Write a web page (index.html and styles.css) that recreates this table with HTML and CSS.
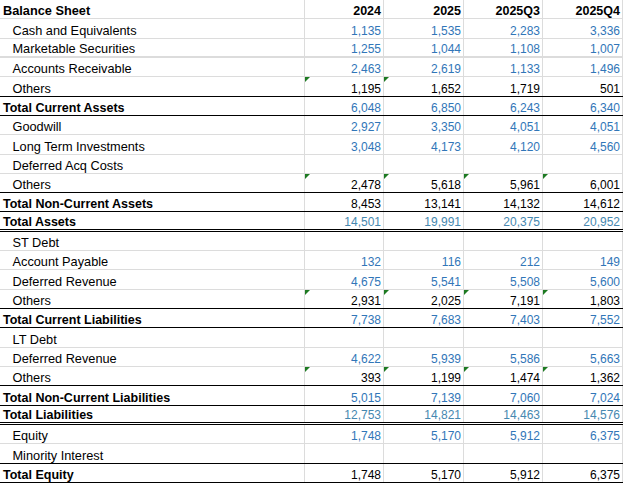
FILE: index.html
```html
<!DOCTYPE html>
<html>
<head>
<meta charset="utf-8">
<link rel="stylesheet" href="styles.css">
</head>
<body>
<div class="sheet">
  <div class="row head"><div class="c lab">Balance Sheet</div><div class="c num">2024</div><div class="c num">2025</div><div class="c num">2025Q3</div><div class="c num">2025Q4</div></div>
  <div class="row blue"><div class="c lab ind">Cash and Equivalents</div><div class="c num">1,135</div><div class="c num">1,535</div><div class="c num">2,283</div><div class="c num">3,336</div></div>
  <div class="row blue gray2"><div class="c lab ind">Marketable Securities</div><div class="c num">1,255</div><div class="c num">1,044</div><div class="c num">1,108</div><div class="c num">1,007</div></div>
  <div class="row blue"><div class="c lab ind">Accounts Receivable</div><div class="c num">2,463</div><div class="c num">2,619</div><div class="c num">1,133</div><div class="c num">1,496</div></div>
  <div class="row rule"><div class="c lab ind">Others</div><div class="c num flag">1,195</div><div class="c num flag">1,652</div><div class="c num">1,719</div><div class="c num">501</div></div>
  <div class="row blue tot rule"><div class="c lab">Total Current Assets</div><div class="c num">6,048</div><div class="c num">6,850</div><div class="c num">6,243</div><div class="c num">6,340</div></div>
  <div class="row blue"><div class="c lab ind">Goodwill</div><div class="c num">2,927</div><div class="c num">3,350</div><div class="c num">4,051</div><div class="c num">4,051</div></div>
  <div class="row blue"><div class="c lab ind">Long Term Investments</div><div class="c num">3,048</div><div class="c num">4,173</div><div class="c num">4,120</div><div class="c num">4,560</div></div>
  <div class="row"><div class="c lab ind">Deferred Acq Costs</div><div class="c num"></div><div class="c num"></div><div class="c num"></div><div class="c num"></div></div>
  <div class="row rule"><div class="c lab ind">Others</div><div class="c num flag">2,478</div><div class="c num flag">5,618</div><div class="c num flag">5,961</div><div class="c num flag">6,001</div></div>
  <div class="row tot rule"><div class="c lab">Total Non-Current Assets</div><div class="c num">8,453</div><div class="c num">13,141</div><div class="c num">14,132</div><div class="c num">14,612</div></div>
  <div class="row teal tot dbl"><div class="c lab">Total Assets</div><div class="c num">14,501</div><div class="c num">19,991</div><div class="c num">20,375</div><div class="c num">20,952</div></div>
  <div class="row"><div class="c lab ind">ST Debt</div><div class="c num"></div><div class="c num"></div><div class="c num"></div><div class="c num"></div></div>
  <div class="row blue"><div class="c lab ind">Account Payable</div><div class="c num">132</div><div class="c num">116</div><div class="c num">212</div><div class="c num">149</div></div>
  <div class="row blue"><div class="c lab ind">Deferred Revenue</div><div class="c num">4,675</div><div class="c num">5,541</div><div class="c num">5,508</div><div class="c num">5,600</div></div>
  <div class="row rule"><div class="c lab ind">Others</div><div class="c num flag">2,931</div><div class="c num flag">2,025</div><div class="c num flag">7,191</div><div class="c num flag">1,803</div></div>
  <div class="row blue tot rule"><div class="c lab">Total Current Liabilities</div><div class="c num">7,738</div><div class="c num">7,683</div><div class="c num">7,403</div><div class="c num">7,552</div></div>
  <div class="row"><div class="c lab ind">LT Debt</div><div class="c num"></div><div class="c num"></div><div class="c num"></div><div class="c num"></div></div>
  <div class="row blue"><div class="c lab ind">Deferred Revenue</div><div class="c num">4,622</div><div class="c num">5,939</div><div class="c num">5,586</div><div class="c num">5,663</div></div>
  <div class="row rule"><div class="c lab ind">Others</div><div class="c num flag">393</div><div class="c num flag">1,199</div><div class="c num flag">1,474</div><div class="c num flag">1,362</div></div>
  <div class="row blue tot rule"><div class="c lab">Total Non-Current Liabilities</div><div class="c num">5,015</div><div class="c num">7,139</div><div class="c num">7,060</div><div class="c num">7,024</div></div>
  <div class="row teal tot dbl"><div class="c lab">Total Liabilities</div><div class="c num">12,753</div><div class="c num">14,821</div><div class="c num">14,463</div><div class="c num">14,576</div></div>
  <div class="row blue"><div class="c lab ind">Equity</div><div class="c num">1,748</div><div class="c num">5,170</div><div class="c num">5,912</div><div class="c num">6,375</div></div>
  <div class="row rule"><div class="c lab ind">Minority Interest</div><div class="c num"></div><div class="c num"></div><div class="c num"></div><div class="c num"></div></div>
  <div class="row tot rule"><div class="c lab">Total Equity</div><div class="c num">1,748</div><div class="c num">5,170</div><div class="c num">5,912</div><div class="c num">6,375</div></div>
</div>
</body>
</html>
```
FILE: styles.css
```css
body {
  margin: 0;
  background: #fff;
  font-family: "Liberation Sans", Arial, sans-serif;
  color: #000;
}
.sheet {
  width: 623px;
}
.row {
  display: grid;
  grid-template-columns: 305px 79px 80px 79px 80px;
  height: 19.32px;
  box-sizing: border-box;
  border-bottom: 1px solid #dcdcdc;
}
.c {
  box-sizing: border-box;
  border-right: 1px solid #dcdcdc;
  display: flex;
  align-items: flex-end;
  padding-bottom: 0;
  line-height: 14px;
  position: relative;
  white-space: nowrap;
}
.lab {
  padding-left: 3px;
  font-size: 12.75px;
}
.lab.ind {
  padding-left: 12.5px;
}
.num {
  justify-content: flex-end;
  padding-right: 2px;
  font-size: 12px;
}
.blue .num {
  color: #3176b8;
}
.teal .num {
  color: #4688b0;
}
.tot .lab {
  font-weight: bold;
  font-size: 12.5px;
}
.head .c {
  font-weight: bold;
}
.head .num {
  font-size: 12.5px;
}
.rule {
  border-bottom-color: #000;
}
.dbl {
  border-bottom: 3px double #000;
}
.gray2 {
  border-bottom-width: 2px;
}
.flag::before {
  content: "";
  position: absolute;
  left: 0;
  top: 0;
  border-top: 5px solid #1d7a22;
  border-right: 5px solid transparent;
}
```
